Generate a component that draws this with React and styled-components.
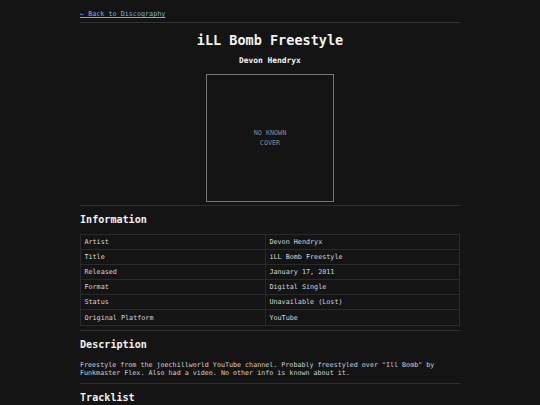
import React from 'react';
import styled, { createGlobalStyle } from 'styled-components';

const GlobalStyle = createGlobalStyle`
  html, body {
    margin: 0;
    padding: 0;
    background: #141414;
  }
  body {
    font-family: "DejaVu Sans Mono", "Liberation Mono", monospace;
    color: #d0d0d0;
  }
`;

const Page = styled.div`
  width: 380px;
  margin: 0 auto;
  padding-top: 10px;
`;

const Nav = styled.nav`
  padding-bottom: 4px;
  border-bottom: 1px solid #333;
  font-size: 6.75px;
  line-height: 8px;
  a {
    color: #6fb2dc;
    text-decoration: underline;
  }
`;

const Header = styled.header`
  text-align: center;
  padding-bottom: 3px;
  border-bottom: 1px solid #2e2e2e;
`;

const Title = styled.h1`
  margin: 9px 0 0;
  font-size: 13.5px;
  line-height: 16px;
  font-weight: bold;
  color: #f2f2f2;
`;

const Artist = styled.h3`
  margin: 8px 0 0;
  font-size: 7.9px;
  line-height: 9.5px;
  font-weight: bold;
  color: #f2f2f2;
`;

const Cover = styled.div`
  width: 128px;
  height: 128px;
  box-sizing: border-box;
  margin: 8px auto 0;
  border: 1px solid #767676;
  display: flex;
  align-items: center;
  justify-content: center;
  text-align: center;
  font-size: 6.75px;
  line-height: 10px;
  color: #8a8a8a;
`;

const Section = styled.section`
  padding-bottom: ${p => p.pad || 6}px;
  border-bottom: ${p => (p.last ? 'none' : '1px solid #2e2e2e')};
`;

const Heading = styled.h2`
  margin: 8px 0 0;
  font-size: 10.1px;
  line-height: 12px;
  font-weight: bold;
  color: #f2f2f2;
`;

const Table = styled.table`
  width: 100%;
  margin-top: 8px;
  border-collapse: collapse;
  font-size: 6.75px;
  color: #d4d4d4;
  td {
    border: 1px solid #2a2a2a;
    height: 15.2px;
    box-sizing: border-box;
    padding: 0 3.4px;
    line-height: 8px;
  }
  td:first-child {
    width: 185px;
  }
`;

const Text = styled.p`
  margin: 10px 0 0;
  font-size: 6.7px;
  line-height: 8.3px;
  color: #d0d0d0;
`;

const info = [
  ['Artist', 'Devon Hendryx'],
  ['Title', 'iLL Bomb Freestyle'],
  ['Released', 'January 17, 2011'],
  ['Format', 'Digital Single'],
  ['Status', 'Unavailable (Lost)'],
  ['Original Platform', 'YouTube'],
];

export default function App() {
  return (
    <>
      <GlobalStyle />
      <Page>
        <Nav>
          <a href="#">← Back to Discography</a>
        </Nav>
        <Header>
          <Title>iLL Bomb Freestyle</Title>
          <Artist>Devon Hendryx</Artist>
          <Cover>
            NO KNOWN
            <br />
            COVER
          </Cover>
        </Header>
        <Section pad={4}>
          <Heading>Information</Heading>
          <Table>
            <tbody>
              {info.map(([k, v]) => (
                <tr key={k}>
                  <td>{k}</td>
                  <td>{v}</td>
                </tr>
              ))}
            </tbody>
          </Table>
        </Section>
        <Section pad={6}>
          <Heading>Description</Heading>
          <Text>
            Freestyle from the joechillworld YouTube channel. Probably freestyled over "Ill Bomb" by
            Funkmaster Flex. Also had a video. No other info is known about it.
          </Text>
        </Section>
        <Section last>
          <Heading>Tracklist</Heading>
        </Section>
      </Page>
    </>
  );
}
